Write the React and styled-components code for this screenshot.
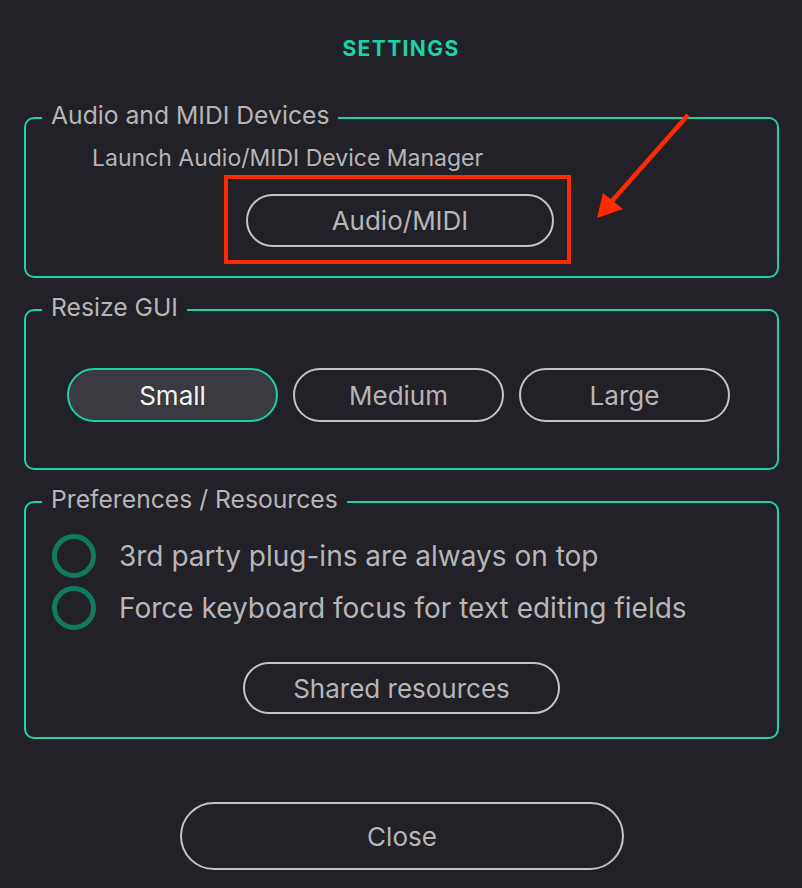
import React from "react";
import styled, { createGlobalStyle } from "styled-components";

const Global = createGlobalStyle`
  html, body { margin: 0; padding: 0; background: #222127; }
  body { font-family: Inter, "Noto Sans", "Liberation Sans", sans-serif; }
  * { box-sizing: border-box; }
`;

const TEAL = "#1cd3a7";
const TEXT = "#b6b6b8";
const LINE = "#c4c4c6";

const Page = styled.div`
  position: relative;
  width: 802px;
  height: 888px;
  background: #222127;
  padding-top: 37px;
  display: flex;
  flex-direction: column;
  overflow: hidden;
`;

const Title = styled.h1`
  margin: 0 0 41px;
  height: 24px;
  line-height: 24px;
  text-align: center;
  font-size: 21px;
  font-weight: 700;
  letter-spacing: 1.4px;
  color: ${TEAL};
`;

const Section = styled.fieldset`
  margin: 0 23px ${(p) => p.$gap || 0}px 24px;
  padding: 0;
  border: 2px solid ${TEAL};
  border-radius: 10px;
  min-width: 0;
`;

const Legend = styled.legend`
  margin-left: 16px;
  padding: 0 9px 6px;
  font-size: 24.7px;
  line-height: 26px;
  color: ${TEXT};
`;

const Body = styled.div`
  display: flex;
  flex-direction: column;
  align-items: ${(p) => p.$align || "flex-start"};
  padding: ${(p) => p.$pad};
`;

const Hint = styled.div`
  margin-left: 66px;
  font-size: 23px;
  line-height: 24px;
  color: ${TEXT};
`;

const Highlight = styled.div`
  margin: 5px 0 0 198px;
  width: 347px;
  height: 89px;
  border: 4px solid #ff2a00;
  padding: 15px 0 0 18px;
`;

const Pill = styled.button`
  width: ${(p) => p.$w}px;
  height: ${(p) => p.$h}px;
  border-radius: 999px;
  border: 2px solid ${(p) => (p.$active ? TEAL : LINE)};
  background: ${(p) => (p.$active ? "#3a3a40" : "transparent")};
  color: ${(p) => (p.$active ? "#f4f4f4" : TEXT)};
  font-family: inherit;
  font-size: ${(p) => p.$fs || 26}px;
  padding: 0;
  cursor: pointer;
  flex: none;
`;

const SizeRow = styled.div`
  display: flex;
  gap: 15px;
`;

const OptionList = styled.div`
  display: flex;
  flex-direction: column;
  gap: 8px;
  align-self: stretch;
  padding-left: 26px;
`;

const Option = styled.label`
  display: flex;
  align-items: center;
  gap: 23px;
  height: 44px;
  font-size: 28px;
  color: ${TEXT};
`;

const Radio = styled.span`
  width: 44px;
  height: 44px;
  border-radius: 50%;
  border: 5px solid #0f7a5e;
  flex: none;
`;

const SharedWrap = styled.div`
  margin-top: 32px;
`;

const CloseRow = styled.div`
  display: flex;
  justify-content: center;
  margin-top: 63px;
  padding-left: 2px;
`;

const Arrow = styled.svg`
  position: absolute;
  left: 0;
  top: 0;
  pointer-events: none;
`;

export default function App() {
  return (
    <>
      <Global />
      <Page>
        <Title>SETTINGS</Title>

        <Section $gap={16}>
          <Legend>Audio and MIDI Devices</Legend>
          <Body $pad="12px 0 12px">
            <Hint>Launch Audio/MIDI Device Manager</Hint>
            <Highlight>
              <Pill $w={308} $h={53}>Audio/MIDI</Pill>
            </Highlight>
          </Body>
        </Section>

        <Section $gap={16}>
          <Legend>Resize GUI</Legend>
          <Body $pad="42px 0 46px 41px">
            <SizeRow>
              <Pill $w={211} $h={54} $active>Small</Pill>
              <Pill $w={211} $h={54}>Medium</Pill>
              <Pill $w={211} $h={54}>Large</Pill>
            </SizeRow>
          </Body>
        </Section>

        <Section>
          <Legend>Preferences / Resources</Legend>
          <Body $pad="16px 0 23px" $align="center">
            <OptionList>
              <Option>
                <Radio />
                3rd party plug-ins are always on top
              </Option>
              <Option>
                <Radio />
                Force keyboard focus for text editing fields
              </Option>
            </OptionList>
            <SharedWrap>
              <Pill $w={317} $h={52}>Shared resources</Pill>
            </SharedWrap>
          </Body>
        </Section>

        <CloseRow>
          <Pill $w={444} $h={68}>Close</Pill>
        </CloseRow>

        <Arrow width="802" height="888" viewBox="0 0 802 888">
          <line x1="688" y1="115" x2="612" y2="201" stroke="#ff2a00" strokeWidth="4.5" strokeLinecap="butt" />
          <polygon points="597,218 603,193 623,209" fill="#ff2a00" />
        </Arrow>
      </Page>
    </>
  );
}
